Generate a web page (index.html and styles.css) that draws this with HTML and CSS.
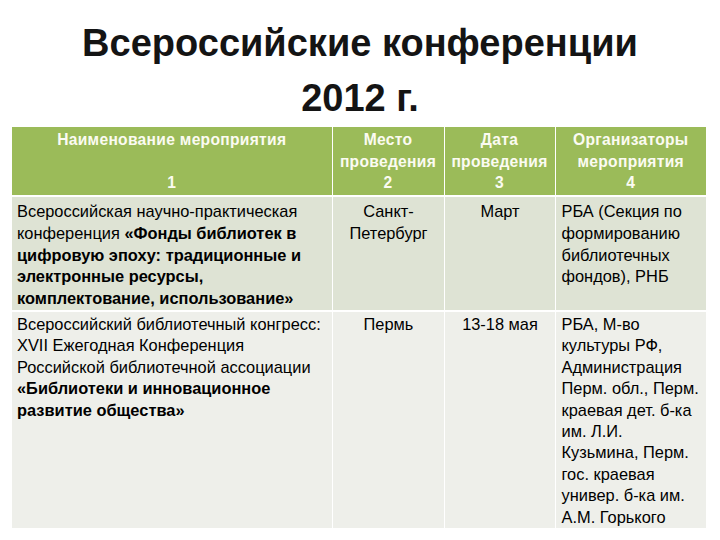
FILE: index.html
```html
<!DOCTYPE html>
<html lang="ru">
<head>
<meta charset="utf-8">
<title>Всероссийские конференции 2012 г.</title>
<link rel="stylesheet" href="styles.css">
</head>
<body>
<h1 class="title">Всероссийские конференции<br>2012 г.</h1>
<table class="grid">
  <colgroup>
    <col class="k1">
    <col class="k2">
    <col class="k3">
    <col class="k4">
  </colgroup>
  <thead>
    <tr class="head">
      <th class="c1">Наименование мероприятия<br>&nbsp;<br>1</th>
      <th class="c2">Место<br>проведения<br>2</th>
      <th class="c3">Дата<br>проведения<br>3</th>
      <th class="c4">Организаторы<br>мероприятия<br>4</th>
    </tr>
  </thead>
  <tbody>
    <tr class="odd">
      <td class="c1">Всероссийская научно-практическая<br>конференция <b>«Фонды библиотек в<br>цифровую эпоху: традиционные и<br>электронные ресурсы,<br>комплектование, использование»</b></td>
      <td class="c2">Санкт-<br>Петербург</td>
      <td class="c3">Март</td>
      <td class="c4">РБА (Секция по<br>формированию<br>библиотечных<br>фондов), РНБ</td>
    </tr>
    <tr class="even">
      <td class="c1">Всероссийский библиотечный конгресс:<br>XVII Ежегодная Конференция<br>Российской библиотечной ассоциации<br><b>«Библиотеки и инновационное<br>развитие общества»</b></td>
      <td class="c2">Пермь</td>
      <td class="c3">13-18 мая</td>
      <td class="c4">РБА, М-во<br>культуры РФ,<br>Администрация<br>Перм. обл., Перм.<br>краевая дет. б-ка<br>им. Л.И.<br>Кузьмина, Перм.<br>гос. краевая<br>универ. б-ка им.<br>А.М. Горького</td>
    </tr>
  </tbody>
</table>
</body>
</html>
```
FILE: styles.css
```css
html, body {
  margin: 0;
  padding: 0;
  background: #ffffff;
}
body {
  width: 720px;
  height: 540px;
  overflow: hidden;
  font-family: "Liberation Sans", Arial, sans-serif;
  color: #000;
}
.title {
  margin: 0;
  padding: 16px 0 0 0;
  height: 127px;
  box-sizing: border-box;
  text-align: center;
  font-size: 38px;
  line-height: 55px;
  font-weight: bold;
  color: #141414;
}
.grid {
  margin-left: 12px;
  width: 694px;
  border-collapse: collapse;
  border-spacing: 0;
  font-size: 16.4px;
  line-height: 21.8px;
  table-layout: fixed;
}
.k1 { width: 320px; }
.k2 { width: 112px; }
.k3 { width: 111px; }
.k4 { width: 151px; }
.grid th, .grid td {
  vertical-align: top;
  white-space: nowrap;
  overflow: visible;
  border-right: 1px solid #ffffff;
  border-bottom: 2px solid #ffffff;
  padding: 4px 5px 0 6px;
}
.grid th:last-child, .grid td:last-child {
  border-right: none;
}
.grid td.c1 { padding-left: 5px; }
.head th {
  background: #9bbb59;
  color: #fbfbf2;
  font-weight: bold;
  font-size: 15.6px;
  letter-spacing: 0.3px;
  text-align: center;
  height: 66px;
  line-height: 21.5px;
  padding: 2px 1px 0 1px;
}
.grid td.c2, .grid td.c3 { text-align: center; }
.grid td.c1, .grid td.c4 { text-align: left; }
.odd td { background: #dee3d4; height: 109px; }
.even td { background: #eeefea; padding-top: 2px; line-height: 21.4px; }
.grid b { font-weight: bold; }
```
